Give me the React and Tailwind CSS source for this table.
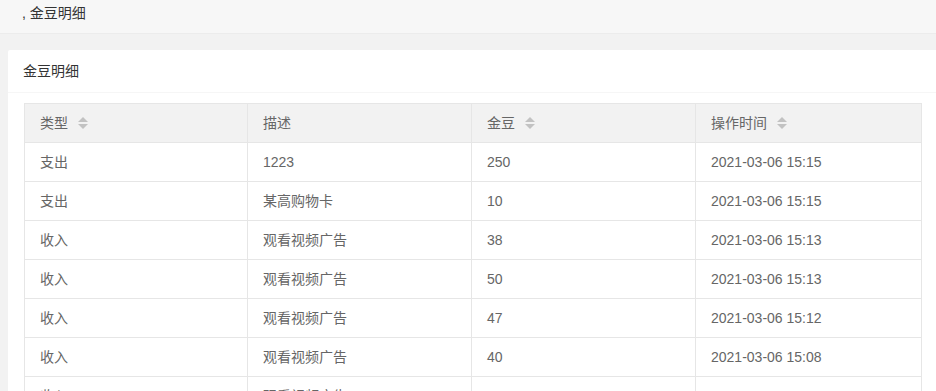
const rows = [
  { type: "支出", desc: "1223", beans: "250", time: "2021-03-06 15:15" },
  { type: "支出", desc: "某高购物卡", beans: "10", time: "2021-03-06 15:15" },
  { type: "收入", desc: "观看视频广告", beans: "38", time: "2021-03-06 15:13" },
  { type: "收入", desc: "观看视频广告", beans: "50", time: "2021-03-06 15:13" },
  { type: "收入", desc: "观看视频广告", beans: "47", time: "2021-03-06 15:12" },
  { type: "收入", desc: "观看视频广告", beans: "40", time: "2021-03-06 15:08" },
  { type: "收入", desc: "观看视频广告", beans: "45", time: "2021-03-06 15:06" },
  { type: "收入", desc: "观看视频广告", beans: "32", time: "2021-03-06 15:05" },
];

function SortIcon() {
  return (
    <svg width="10" height="12" viewBox="0 0 10 12" className="ml-[10px] inline-block">
      <polygon points="0,5 5,0 10,5" fill="#c2c2c2" />
      <polygon points="0,7 5,12 10,7" fill="#c2c2c2" />
    </svg>
  );
}

export default function App() {
  const headers = [
    { label: "类型", sort: true },
    { label: "描述", sort: false },
    { label: "金豆", sort: true },
    { label: "操作时间", sort: true },
  ];

  return (
    <div
      className="w-full h-[391px] overflow-hidden bg-[#f2f2f2] text-[14px]"
      style={{ fontFamily: '"Liberation Sans", "Noto Sans CJK SC", sans-serif' }}
    >
      {/* breadcrumb bar */}
      <div className="h-[34px] bg-[#f7f7f7] border-b border-[#ececec] pl-[22px] leading-[27px] text-[#333]">
        , 金豆明细
      </div>

      <div className="pt-[16px] pl-[8px]">
        <div className="w-[960px] bg-white rounded-[2px]">
          <div className="h-[43px] leading-[43px] px-[15px] border-b border-[#f6f6f6] text-[#333]">
            金豆明细
          </div>
          <div className="pt-[10px] pl-[16px] pb-4">
            <table className="w-[898px] table-fixed border-collapse border border-[#e6e6e6] text-[#666]">
              <colgroup>
                <col className="w-[223px]" />
                <col className="w-[224px]" />
                <col className="w-[224px]" />
                <col />
              </colgroup>
              <thead>
                <tr className="bg-[#f2f2f2] h-[39px]">
                  {headers.map((h) => (
                    <th
                      key={h.label}
                      className="border border-[#e6e6e6] px-[15px] text-left font-normal"
                    >
                      <span className="inline-flex items-center">
                        {h.label}
                        {h.sort && <SortIcon />}
                      </span>
                    </th>
                  ))}
                </tr>
              </thead>
              <tbody>
                {rows.map((r, i) => (
                  <tr key={i} className="h-[39px]">
                    <td className="border border-[#e6e6e6] px-[15px]">{r.type}</td>
                    <td className="border border-[#e6e6e6] px-[15px]">{r.desc}</td>
                    <td className="border border-[#e6e6e6] px-[15px]">{r.beans}</td>
                    <td className="border border-[#e6e6e6] px-[15px]">{r.time}</td>
                  </tr>
                ))}
              </tbody>
            </table>
          </div>
        </div>
      </div>
    </div>
  );
}
